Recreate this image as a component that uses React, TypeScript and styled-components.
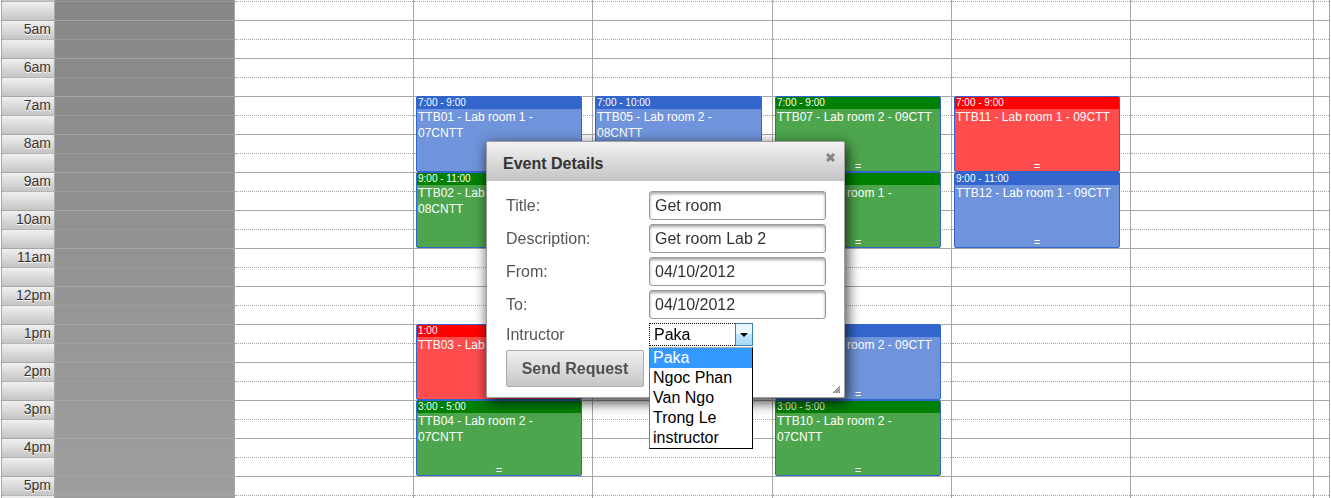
import React, { useState } from "react";
import styled, { createGlobalStyle } from "styled-components";

const LINE = "#a6a6a6";
const BLUE = "#3366cc";

const tones = {
  blue: { head: "#3366cc", body: "#7094db" },
  green: { head: "#008000", body: "#4da64d" },
  red: { head: "#ff0000", body: "#ff4d4d" },
};
type Tone = keyof typeof tones;

const GlobalStyle = createGlobalStyle`
  *, *::before, *::after { box-sizing: border-box; }
  body {
    margin: 0;
    background: #fff;
    color: #333;
    font-family: "Liberation Sans", Arial, sans-serif;
    overflow: hidden;
  }
`;

const Calendar = styled.main`
  display: grid;
  grid-template-columns:
    53px minmax(0, 180fr) minmax(0, 179fr) minmax(0, 179fr) minmax(0, 180fr)
    minmax(0, 179fr) minmax(0, 179fr) minmax(0, 183fr) 17px;
  height: 100vh;
  margin: 0 1px;
  overflow: hidden;
`;

const Column = styled.section<{ $past?: boolean; $last?: boolean }>`
  display: grid;
  grid-template-columns: minmax(0, 1fr);
  grid-template-rows: 1px;
  grid-auto-rows: 19px;
  border-left: 1px solid ${LINE};
  border-right: ${(p) => (p.$last ? `1px solid ${LINE}` : "0")};
  background: ${(p) => (p.$past ? "linear-gradient(#878787, #9f9f9f)" : "#fff")};
`;

const Slot = styled.div<{ $row: number; $hour: boolean }>`
  grid-area: ${(p) => p.$row} / 1;
  border-top: 1px ${(p) => (p.$hour ? "solid" : "dotted")} ${LINE};
`;

const AxisSlot = styled(Slot)`
  padding-right: 3px;
  background: linear-gradient(#f0f0f0, #c5c5c5);
  font-size: 14px;
  line-height: 17px;
  text-align: right;
  text-shadow: 0 1px 0 #fff;
`;

const AxisCap = styled.div`
  background: #c5c5c5;
`;

const EventCard = styled.article<{ $from: number; $to: number; $tone: Tone }>`
  grid-column: 1;
  grid-row: ${(p) => p.$from} / ${(p) => p.$to};
  z-index: 1;
  display: flex;
  flex-direction: column;
  margin: 0 10px 0 2px;
  border: 1px solid ${BLUE};
  border-radius: 2px;
  overflow: hidden;
  background: ${(p) => tones[p.$tone].body};
  color: #fff;
  font-size: 12px;
  line-height: 16px;
`;

const EventTime = styled.header<{ $tone: Tone }>`
  padding-left: 1px;
  background: ${(p) => tones[p.$tone].head};
  font-size: 10px;
  line-height: 12px;
`;

const EventTitle = styled.div`
  padding: 0 4px 0 1px;
`;

const Handle = styled.div`
  margin-top: auto;
  font-family: "Liberation Mono", monospace;
  font-size: 11px;
  line-height: 7px;
  text-align: center;
`;

const Overlay = styled.div`
  position: fixed;
  inset: 0;
  z-index: 2;
  display: flex;
  justify-content: center;
  align-items: flex-start;
  padding-top: 141px;
`;

const Dialog = styled.div`
  position: relative;
  width: 359px;
  border: 1px solid #a0a0a0;
  border-radius: 2px;
  background: #fff;
  box-shadow: 2px 4px 14px rgba(0, 0, 0, 0.8);
`;

const DialogBar = styled.header`
  display: flex;
  justify-content: space-between;
  align-items: flex-start;
  height: 39px;
  padding: 0 9px 0 16px;
  background: linear-gradient(#f2f2f2, #c4c4c4);
`;

const DialogTitle = styled.h2`
  margin: 0;
  font-size: 16px;
  line-height: 43px;
`;

const CloseButton = styled.button`
  display: flex;
  margin: 0;
  padding: 11px 0 0;
  border: 0;
  background: none;
`;

const Form = styled.form`
  display: grid;
  grid-template-columns: 143px 177px;
  row-gap: 4px;
  padding: 10px 0 10px 19px;
  font-size: 16px;
`;

const Label = styled.label`
  align-self: center;
  color: #555;
`;

const Field = styled.input`
  width: 100%;
  height: 29px;
  padding: 1px 5px 0;
  border: 1px solid #999;
  border-radius: 3px;
  outline: 0;
  box-shadow: inset 0 2px 3px rgba(0, 0, 0, 0.35);
  color: #333;
  font: inherit;
`;

const Picker = styled.div`
  position: relative;
  width: 104px;
  height: 23px;
`;

const Select = styled.select`
  appearance: none;
  width: 100%;
  height: 100%;
  padding: 0 4px;
  border: 1px dotted #000;
  border-radius: 0;
  outline: 0;
  background: #fff;
  color: #000;
  font: inherit;
`;

const DropIcon = styled.span`
  position: absolute;
  top: 0;
  right: 0;
  display: flex;
  align-items: center;
  justify-content: center;
  width: 18px;
  height: 23px;
  border: 1px solid #3c7fb1;
  background: linear-gradient(#eaf6fd 50%, #bee6fd 50%, #a7d9f5);
  pointer-events: none;
`;

const Options = styled.ul`
  position: absolute;
  top: 24px;
  left: 0;
  width: 104px;
  margin: 0;
  padding: 0;
  border: 1px solid #000;
  border-top-color: #b0b0b0;
  border-left-color: #777;
  background: #fff;
  color: #000;
  list-style: none;
`;

const Option = styled.li<{ $active: boolean }>`
  padding-left: 3px;
  background: ${(p) => (p.$active ? "#3399ff" : "#fff")};
  color: ${(p) => (p.$active ? "#fff" : "#000")};
  line-height: 20px;
`;

const SendButton = styled.button`
  width: 138px;
  height: 37px;
  padding: 0;
  border: 1px solid #aaa;
  border-radius: 2px;
  background: linear-gradient(#f0f0f0, #c6c6c6);
  color: #4f4f4f;
  font: bold 16px "Liberation Sans", Arial, sans-serif;
`;

const Grip = styled.svg`
  position: absolute;
  right: 4px;
  bottom: 4px;
`;

type Booking = { from: number; to: number; time: string; title: string; tone: Tone };

const days: Booking[][] = [
  [],
  [],
  [
    { from: 7, to: 9, time: "7:00 - 9:00", title: "TTB01 - Lab room 1 - 07CNTT", tone: "blue" },
    { from: 9, to: 11, time: "9:00 - 11:00", title: "TTB02 - Lab room 1 - 08CNTT", tone: "green" },
    { from: 13, to: 15, time: "1:00", title: "TTB03 - Lab room 1", tone: "red" },
    { from: 15, to: 17, time: "3:00 - 5:00", title: "TTB04 - Lab room 2 - 07CNTT", tone: "green" },
  ],
  [{ from: 7, to: 10, time: "7:00 - 10:00", title: "TTB05 - Lab room 2 - 08CNTT", tone: "blue" }],
  [
    { from: 7, to: 9, time: "7:00 - 9:00", title: "TTB07 - Lab room 2 - 09CTT", tone: "green" },
    { from: 9, to: 11, time: "9:00 - 11:00", title: "TTB08 - Lab room 1 - 08CNTT", tone: "green" },
    { from: 13, to: 15, time: "1:00 - 3:00", title: "TTB09 - Lab room 2 - 09CTT", tone: "blue" },
    { from: 15, to: 17, time: "3:00 - 5:00", title: "TTB10 - Lab room 2 - 07CNTT", tone: "green" },
  ],
  [
    { from: 7, to: 9, time: "7:00 - 9:00", title: "TTB11 - Lab room 1 - 09CTT", tone: "red" },
    { from: 9, to: 11, time: "9:00 - 11:00", title: "TTB12 - Lab room 1 - 09CTT", tone: "blue" },
  ],
  [],
  [],
];

// Half-hour slots from 4:30 on; the first grid row is the tail of the 4:00 slot.
const FIRST = 4.5;
const slots = Array.from({ length: 27 }, (_, i) => FIRST + i / 2);
const rowOf = (hour: number) => (hour - FIRST) * 2 + 2;
const hourName = (h: number) => (h < 12 ? `${h}am` : `${h === 12 ? 12 : h - 12}pm`);

const instructors = ["Paka", "Ngoc Phan", "Van Ngo", "Trong Le", "instructor"];

const fields = [
  { id: "title", label: "Title:", value: "Get room" },
  { id: "description", label: "Description:", value: "Get room Lab 2" },
  { id: "from", label: "From:", value: "04/10/2012" },
  { id: "to", label: "To:", value: "04/10/2012" },
];

export default function App() {
  const [instructor, setInstructor] = useState("Paka");
  return (
    <>
      <GlobalStyle />
      <Calendar>
        <Column>
          <AxisCap />
          {slots.map((h) => (
            <AxisSlot key={h} $row={rowOf(h)} $hour={h % 1 === 0}>
              {h % 1 === 0 ? hourName(h) : null}
            </AxisSlot>
          ))}
        </Column>
        {days.map((bookings, day) => (
          <Column key={day} $past={day === 0} $last={day === days.length - 1}>
            {slots.map((h) => (
              <Slot key={h} $row={rowOf(h)} $hour={h % 1 === 0} />
            ))}
            {bookings.map((b) => (
              <EventCard key={b.title} $from={rowOf(b.from)} $to={rowOf(b.to)} $tone={b.tone}>
                <EventTime $tone={b.tone}>{b.time}</EventTime>
                <EventTitle>{b.title}</EventTitle>
                <Handle>=</Handle>
              </EventCard>
            ))}
          </Column>
        ))}
      </Calendar>
      <Overlay>
        <Dialog role="dialog" aria-labelledby="dialog-title">
          <DialogBar>
            <DialogTitle id="dialog-title">Event Details</DialogTitle>
            <CloseButton type="button" aria-label="Close">
              <svg width="9" height="9" viewBox="0 0 9 9">
                <path d="M1 1L8 8M8 1L1 8" stroke="#858585" strokeWidth="3" />
              </svg>
            </CloseButton>
          </DialogBar>
          <Form onSubmit={(e) => e.preventDefault()}>
            {fields.map((f) => (
              <React.Fragment key={f.id}>
                <Label htmlFor={f.id}>{f.label}</Label>
                <Field id={f.id} type="text" defaultValue={f.value} />
              </React.Fragment>
            ))}
            <Label htmlFor="instructor">Intructor</Label>
            <Picker>
              <Select
                id="instructor"
                value={instructor}
                onChange={(e) => setInstructor(e.target.value)}
              >
                {instructors.map((name) => (
                  <option key={name}>{name}</option>
                ))}
              </Select>
              <DropIcon>
                <svg width="8" height="4" viewBox="0 0 8 4">
                  <path d="M0 0H8L4 4Z" fill="#000" />
                </svg>
              </DropIcon>
              <Options role="listbox" aria-label="Intructor">
                {instructors.map((name) => (
                  <Option
                    key={name}
                    role="option"
                    aria-selected={name === instructor}
                    $active={name === instructor}
                    onClick={() => setInstructor(name)}
                  >
                    {name}
                  </Option>
                ))}
              </Options>
            </Picker>
            <SendButton type="submit">Send Request</SendButton>
          </Form>
          <Grip width="7" height="7" viewBox="0 0 7 7">
            <path d="M0 7L7 0V7Z" fill="#b0b0b0" />
            <path d="M0 7L7 0M3 7L7 3M6 7L7 6" stroke="#808080" strokeWidth="1" />
          </Grip>
        </Dialog>
      </Overlay>
    </>
  );
}
